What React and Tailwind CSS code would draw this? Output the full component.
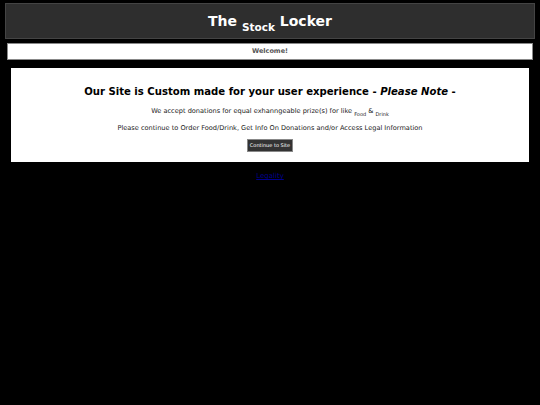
import React from "react";

export default function App() {
  return (
    <div className="min-h-[405px] bg-black pt-[3px] font-['DejaVu_Sans',sans-serif]">
      {/* header */}
      <div className="mx-[5px] h-[36px] border border-[#444] bg-[#2e2e2e] flex items-center justify-center">
        <h1 className="text-white font-bold text-[14px] leading-none">
          The <sub className="text-[10.5px] align-[-2px]">Stock</sub> Locker
        </h1>
      </div>

      {/* welcome bar */}
      <div className="mx-[7px] mt-[4px] h-[17px] border border-[#888] bg-white flex items-center justify-center">
        <span className="text-[#555] font-bold text-[6.5px]">Welcome!</span>
      </div>

      {/* main card */}
      <div className="mx-[11px] mt-[8px] h-[94px] bg-white flex flex-col items-center pt-[19px]">
        <h2 className="text-black font-bold text-[10.1px] leading-none">
          Our Site is Custom made for your user experience - <i>Please Note</i> -
        </h2>
        <p className="mt-[11px] text-[#222] text-[6.6px] leading-none">
          We accept donations for equal exhanngeable prize(s) for like{" "}
          <sub className="text-[5px] align-[-2px]">Food</sub> &amp;{" "}
          <sub className="text-[5px] align-[-2px]">Drink</sub>
        </p>
        <p className="mt-[10px] text-[#222] text-[6.6px] leading-none">
          Please continue to Order Food/Drink, Get Info On Donations and/or Access Legal Information
        </p>
        <button className="mt-[8px] h-[13px] px-[2px] bg-[#333] border border-[#888] text-white text-[5px] leading-none">
          Continue to Site
        </button>
      </div>

      <div className="mt-[9px] flex justify-center">
        <a href="#" className="text-[#00008b] underline text-[7px]">
          Legality
        </a>
      </div>
    </div>
  );
}
